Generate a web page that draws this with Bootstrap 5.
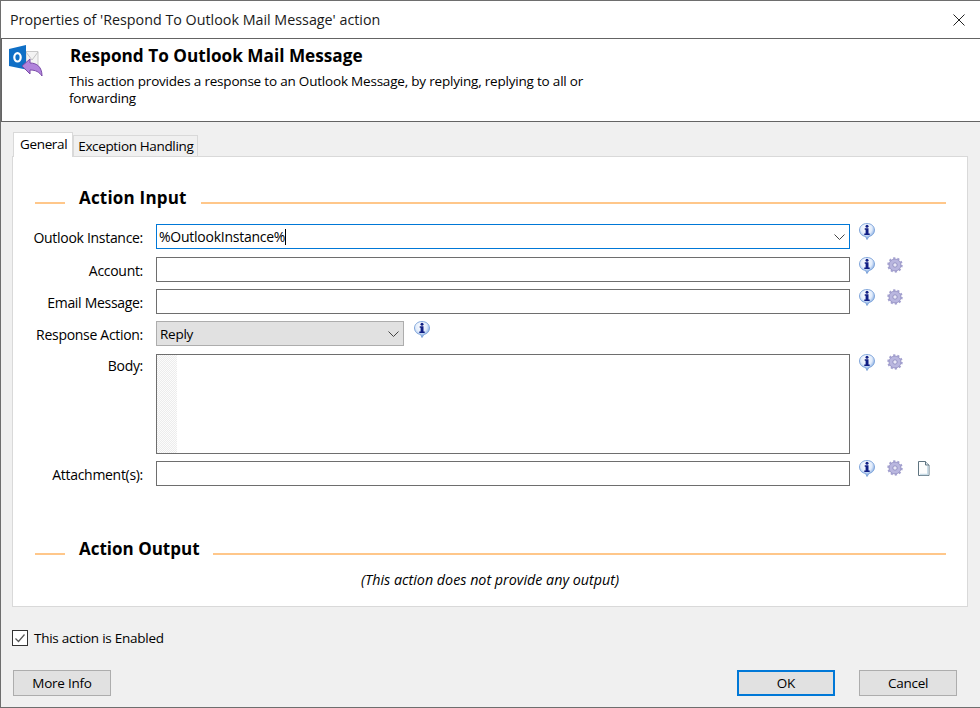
<!DOCTYPE html>
<html lang="en">
<head>
  <meta charset="UTF-8">
  <meta name="viewport" content="width=device-width, initial-scale=1">
  <title>Properties</title>
  <link href="https://cdn.jsdelivr.net/npm/bootstrap@5.3.0/dist/css/bootstrap.min.css" rel="stylesheet">
  <style>
    html, body { height: 708px; overflow: hidden; }
    body { background: #f0f0f0; font-family: "Open Sans", "Noto Sans", sans-serif; font-size: 13.5px; letter-spacing: -.25px; color: #000; }
    .dlg { height: 708px; display: flex; flex-direction: column; border: 1px solid #6e6e6e; border-right: 0; }
    .dlg-title { height: 37px; background: #fff; padding-left: 9px; padding-right: 15px; font-size: 14.3px; letter-spacing: 0; color: #1a1a1a; }
    .dlg-head { height: 84px; background: #fff; border: 1px solid #646464; border-right: 0; display: flex; padding: 4px 0 0 6px; }
    .dlg-head h1 { font-size: 17.2px; font-weight: 700; margin: 3px 0 7px 1px; line-height: 20px; letter-spacing: 0; }
    .dlg-head p { margin: 0; width: 530px; line-height: 17px; letter-spacing: -.2px; }
    .head-text { margin-left: 26px; }
    .dlg-body { flex: 1; padding: 9px 12px 0 11px; display: flex; flex-direction: column; }
    .tab-row { height: 25px; border: 0; align-items: flex-end; padding-left: 1px; }
    .tab-row .nav-link { font-size: 13.5px; letter-spacing: -.35px; color: #000; padding: 0 4px; height: 22px; line-height: 21px; border: 1px solid #d9d9d9; border-bottom: 0; border-radius: 0; background: #f0f0f0; }
    .tab-row .nav-link.active { height: 25px; line-height: 23px; padding: 0 5px 0 6px; background: #fff; margin-bottom: -1px; position: relative; color: #000; border-color: #d9d9d9; }
    .tab-pane-box { height: 451px; background: #fff; border: 1px solid #d9d9d9; padding: 36px 21px 0 0; }
    .sect { display: flex; align-items: center; padding-left: 22px; height: 20px; }
    .sect b { font-size: 17px; padding: 0 13px 0 14px; line-height: 20px; letter-spacing: 0; position: relative; top: -5px; }
    .sect i { display: block; height: 2px; background: #ffc78a; }
    .sect i:first-child { width: 30px; }
    .sect i:last-child { flex: 1; }
    .sect-in { margin-bottom: 11px; }
    .sect-in b { letter-spacing: .2px; padding-right: 14px; }
    .sect-out { margin-top: 58px; }
    .frow { display: flex; margin-bottom: 8px; }
    .frow-tight { margin-bottom: 7px; }
    .frow-last { margin-bottom: 0; }
    .frow label { width: 130px; height: 25px; text-align: right; margin-right: 13px; line-height: 27px; font-size: 14px; letter-spacing: -.3px; }
    .frow label.lbl-body { line-height: 23px; }
    .fld { width: 694px; height: 25px; border: 1px solid #6e6e6e; border-radius: 0; padding: 0 2px; font-size: 14px; background-color: #fff; box-shadow: none; }
    .fld-combo { border-color: #0078d7; line-height: 23px; background: #fff url("data:image/svg+xml,%3Csvg xmlns='http://www.w3.org/2000/svg' width='11' height='6'%3E%3Cpath d='M.5.5l5 5 5-5' fill='none' stroke='%23444'/%3E%3C/svg%3E") no-repeat right 4px center; }
    .caret-bar { display: inline-block; width: 1px; height: 16px; background: #000; vertical-align: -3px; }
    .fld-sel { width: 248px; height: 25px; border: 1px solid #adadad; border-radius: 0; padding: 0 3px; font-size: 13.5px; line-height: 24px; background: #e1e1e1 url("data:image/svg+xml,%3Csvg xmlns='http://www.w3.org/2000/svg' width='11' height='6'%3E%3Cpath d='M.5.5l5 5 5-5' fill='none' stroke='%23444'/%3E%3C/svg%3E") no-repeat right 4px center; }
    .fld-area { width: 694px; height: 100px; border: 1px solid #6e6e6e; display: flex; background: #fff; }
    .gutter { width: 20px; background-color: #f6f6f6; background-image: repeating-conic-gradient(#ececec 0 25%, #fcfcfc 0 50%); background-size: 2px 2px; }
    .fld-area textarea { flex: 1; border: 0; resize: none; outline: 0; }
    .ico-set { display: flex; padding-left: 9px; gap: 12px; height: 17px; }
    .ico-set svg { flex: none; }
    .ico-first { margin-top: -1px; }
    .ico-sel { padding-left: 10px; }
    .ico-doc { margin-left: 2px; margin-top: 1px; }
    .no-out { text-align: center; font-style: italic; font-size: 14.3px; letter-spacing: 0; margin: 6px -21px 0 0; line-height: 20px; }
    .en-row { display: flex; align-items: center; margin: 22px 0 0 0; height: 18px; }
    .en-row input.form-check-input { width: 16px; height: 16px; margin: 0 6px 0 0; border: 1px solid #333; border-radius: 0; background-color: #fff; background-size: 14px; background-image: url("data:image/svg+xml,%3Csvg xmlns='http://www.w3.org/2000/svg' viewBox='0 0 14 14'%3E%3Cpath d='M2.5 7.5l3 3 6-7' fill='none' stroke='%23555' stroke-width='1.2'/%3E%3C/svg%3E"); }
    .btn-row { display: flex; margin-top: 23px; padding-left: 1px; padding-right: 11px; }
    .btn-win { width: 98px; height: 26px; padding: 0; font-size: 13.5px; letter-spacing: -.25px; color: #000; background: #e1e1e1; border: 1px solid #adadad; border-radius: 0; }
    .btn-win.is-default { border: 2px solid #0078d7; margin-right: 24px; }
  </style>
</head>
<body>
  <svg width="0" height="0" class="position-absolute">
    <defs>
      <radialGradient id="infoFill" cx=".45" cy=".3" r=".75">
        <stop offset="0" stop-color="#ffffff"/><stop offset=".5" stop-color="#e2ecfb"/><stop offset="1" stop-color="#4f86d4"/>
      </radialGradient>
      <symbol id="icoInfo" viewBox="0 0 16 17">
        <path d="M8 .5C12.200.5 15.500 3.200 15.500 7 15.500 10.500 13 13 10 13.400L8 16.500 6.500 13.400C3 13 .5 10.500.5 7 .5 3.200 3.800.5 8 .5z" fill="url(#infoFill)" stroke="#7ba2d8" stroke-width=".9"/>
        <circle cx="8" cy="3.300" r="1.500" fill="#101f85"/>
        <path d="M5.700 5.300h3.800v5.200h1.200v1.500H5.300v-1.500h1.300V6.800h-.9z" fill="#101f85"/>
      </symbol>
      <symbol id="icoGear" viewBox="0 0 16 16">
        <circle cx="8" cy="8" r="6" fill="#b9b6df" stroke="#8b88bb" stroke-width=".8"/>
        <circle cx="8" cy="8" r="6.600" fill="none" stroke="#a3a0cf" stroke-width="2.200" stroke-dasharray="2.150 2"/>
        <circle cx="8" cy="8" r="2.200" fill="#e9e8f6" stroke="#8f8cc0" stroke-width=".9"/>
      </symbol>
      <symbol id="icoDoc" viewBox="0 0 13 15">
        <path d="M1.500.5h7l3.500 3.500v10.500H1.500z" fill="#fdfdfd" stroke="#5f7480"/>
        <path d="M8.500.5V4H12" fill="#dfe8ee" stroke="#5f7480"/>
        <path d="M10.800 5v8.500H3" fill="none" stroke="#c8dbe6" stroke-width="1.500"/>
      </symbol>
    </defs>
  </svg>

  <div class="dlg">
    <div class="dlg-title d-flex align-items-center justify-content-between">
      <span>Properties of 'Respond To Outlook Mail Message' action</span>
      <svg width="12" height="12" viewBox="0 0 12 12"><path d="M.5.5l11 11M11.500.5l-11 11" stroke="#222" fill="none"/></svg>
    </div>

    <div class="dlg-head">
      <svg width="35" height="36" viewBox="0 0 35 36">
        <path d="M18 8.500h12v17.500H18z" fill="#f3f3f3" stroke="#c9c9c9"/>
        <path d="M18 9l6 8 6-8" fill="none" stroke="#c4c4c4"/>
        <path d="M1 6L18 2v24.500L1 23z" fill="#0f6fc6"/>
        <ellipse cx="9.500" cy="14.300" rx="3.200" ry="4.200" fill="none" stroke="#fff" stroke-width="2.200"/>
        <path d="M14 23l8-7v4c7 0 12 4 12 13-3-4-6-6-12-6v4z" fill="#b184dc" stroke="#7a4aa8"/>
      </svg>
      <div class="head-text">
        <h1>Respond To Outlook Mail Message</h1>
        <p>This action provides a response to an Outlook Message, by replying, replying to all or forwarding</p>
      </div>
    </div>

    <div class="dlg-body">
      <ul class="nav nav-tabs tab-row">
        <li class="nav-item"><a class="nav-link active" href="#">General</a></li>
        <li class="nav-item"><a class="nav-link" href="#">Exception Handling</a></li>
      </ul>
      <div class="tab-pane-box">
        <div class="sect sect-in"><i></i><b>Action Input</b><i></i></div>

        <div class="frow">
          <label>Outlook Instance:</label>
          <div class="fld fld-combo">%OutlookInstance%<span class="caret-bar"></span></div>
          <div class="ico-set ico-first"><svg width="16" height="17"><use href="#icoInfo"/></svg></div>
        </div>
        <div class="frow frow-tight">
          <label>Account:</label>
          <input type="text" class="form-control fld">
          <div class="ico-set"><svg width="16" height="17"><use href="#icoInfo"/></svg><svg width="16" height="16"><use href="#icoGear"/></svg></div>
        </div>
        <div class="frow frow-tight">
          <label>Email Message:</label>
          <input type="text" class="form-control fld">
          <div class="ico-set"><svg width="16" height="17"><use href="#icoInfo"/></svg><svg width="16" height="16"><use href="#icoGear"/></svg></div>
        </div>
        <div class="frow">
          <label>Response Action:</label>
          <div class="fld-sel">Reply</div>
          <div class="ico-set ico-sel"><svg width="16" height="17"><use href="#icoInfo"/></svg></div>
        </div>
        <div class="frow frow-tight">
          <label class="lbl-body">Body:</label>
          <div class="fld-area"><div class="gutter"></div><textarea></textarea></div>
          <div class="ico-set"><svg width="16" height="17"><use href="#icoInfo"/></svg><svg width="16" height="16"><use href="#icoGear"/></svg></div>
        </div>
        <div class="frow frow-last">
          <label>Attachment(s):</label>
          <input type="text" class="form-control fld">
          <div class="ico-set ico-first"><svg width="16" height="17"><use href="#icoInfo"/></svg><svg width="16" height="16"><use href="#icoGear"/></svg><svg width="13" height="15" class="ico-doc"><use href="#icoDoc"/></svg></div>
        </div>

        <div class="sect sect-out"><i></i><b>Action Output</b><i></i></div>
        <div class="no-out">(This action does not provide any output)</div>
      </div>

      <div class="en-row">
        <input class="form-check-input" type="checkbox" checked id="enabledChk">
        <label for="enabledChk">This action is Enabled</label>
      </div>

      <div class="btn-row">
        <button class="btn btn-win">More Info</button>
        <button class="btn btn-win is-default ms-auto">OK</button>
        <button class="btn btn-win">Cancel</button>
      </div>
    </div>
  </div>
</body>
</html>
